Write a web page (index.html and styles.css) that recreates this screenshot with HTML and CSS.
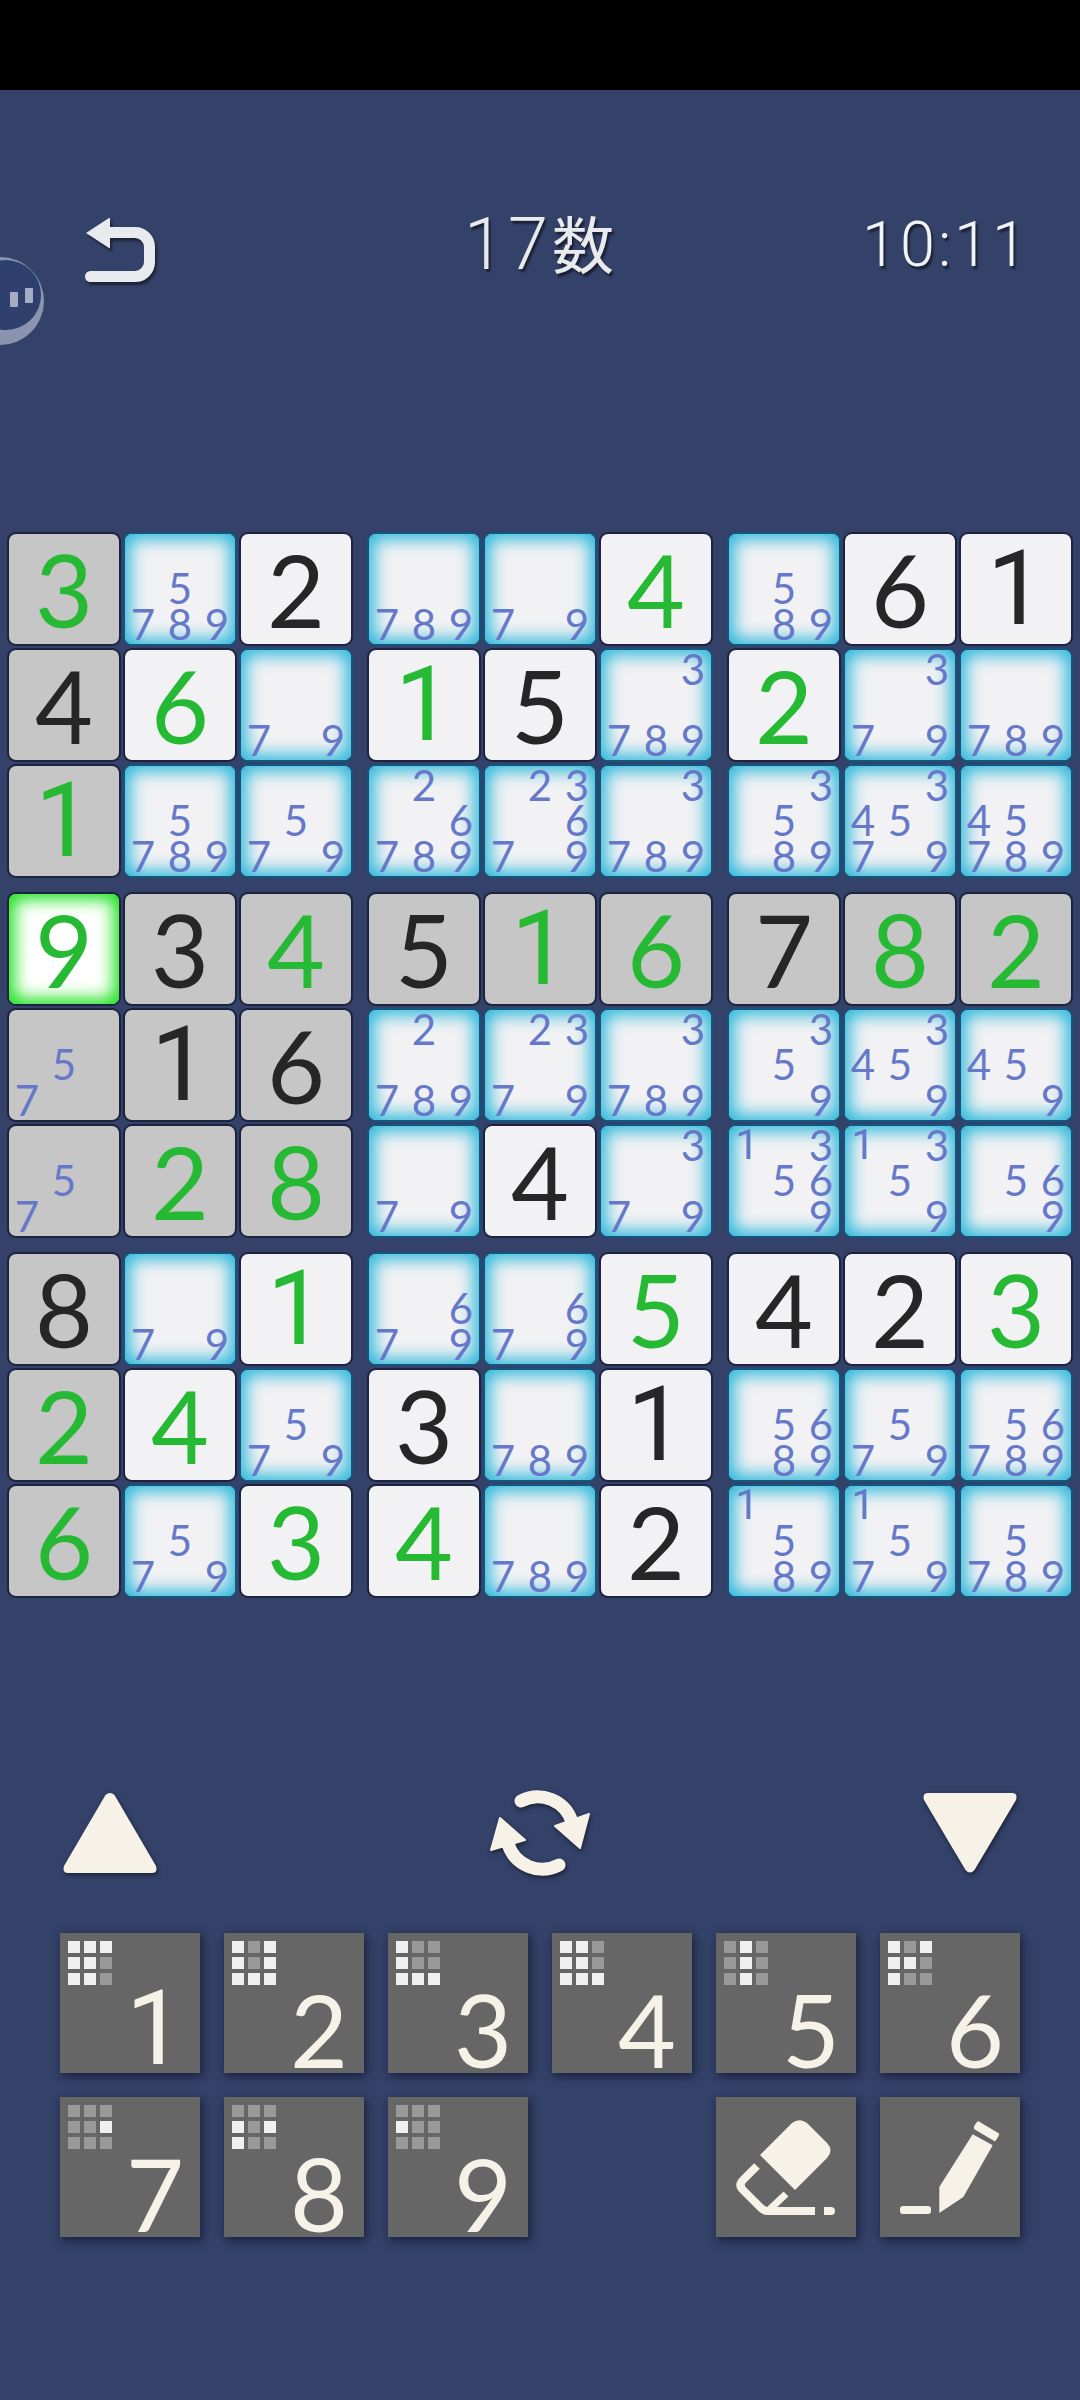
FILE: index.html
```html
<!DOCTYPE html>
<html lang="ja">
<head>
    <meta charset="UTF-8">
    <meta name="viewport" content="width=device-width, initial-scale=1.0">
    <title>17数</title>
    <link rel="stylesheet" href="styles.css">
</head>
<body>
    <div class="statusbar"></div>

    <svg class="floater" width="44" height="88" viewBox="0 0 44 88">
        <circle cx="0" cy="44" r="44" fill="#8b94ae"/>
        <circle cx="6" cy="38" r="35" fill="#2f3f6e"/>
        <rect x="10" y="35" width="8" height="15" rx="1" fill="#a6adc2"/>
        <rect x="25" y="31" width="8" height="15" rx="1" fill="#a6adc2"/>
    </svg>

    <header class="topbar">
        <svg class="back" width="72" height="68" viewBox="0 0 72 68">
            <path d="M1 16 L24 1 Q25 0.5 25 2 V30 Q25 32 24 31 Z" fill="#e9eaed"/>
            <path d="M22 15.5 H50 A14.5 14.5 0 0 1 64.5 30 V45 A14.5 14.5 0 0 1 50 59.5 H5.5" fill="none" stroke="#e9eaed" stroke-width="11" stroke-linecap="round"/>
        </svg>
        <div class="title">17<span class="kanji">数</span></div>
        <div class="clock">10:11</div>
    </header>

    <main class="board">
        <div class="box">
            <div class="cell dim g">3</div>
            <div class="cell notes glow"><span class="n5">5</span><span class="n7">7</span><span class="n8">8</span><span class="n9">9</span></div>
            <div class="cell k">2</div>
            <div class="cell dim k">4</div>
            <div class="cell g">6</div>
            <div class="cell notes glow"><span class="n7">7</span><span class="n9">9</span></div>
            <div class="cell dim g one">1</div>
            <div class="cell notes glow"><span class="n5">5</span><span class="n7">7</span><span class="n8">8</span><span class="n9">9</span></div>
            <div class="cell notes glow"><span class="n5">5</span><span class="n7">7</span><span class="n9">9</span></div>
        </div>
        <div class="box">
            <div class="cell notes glow"><span class="n7">7</span><span class="n8">8</span><span class="n9">9</span></div>
            <div class="cell notes glow"><span class="n7">7</span><span class="n9">9</span></div>
            <div class="cell g">4</div>
            <div class="cell g one">1</div>
            <div class="cell k">5</div>
            <div class="cell notes glow"><span class="n3">3</span><span class="n7">7</span><span class="n8">8</span><span class="n9">9</span></div>
            <div class="cell notes glow"><span class="n2">2</span><span class="n6">6</span><span class="n7">7</span><span class="n8">8</span><span class="n9">9</span></div>
            <div class="cell notes glow"><span class="n2">2</span><span class="n3">3</span><span class="n6">6</span><span class="n7">7</span><span class="n9">9</span></div>
            <div class="cell notes glow"><span class="n3">3</span><span class="n7">7</span><span class="n8">8</span><span class="n9">9</span></div>
        </div>
        <div class="box">
            <div class="cell notes glow"><span class="n5">5</span><span class="n8">8</span><span class="n9">9</span></div>
            <div class="cell k">6</div>
            <div class="cell k one">1</div>
            <div class="cell g">2</div>
            <div class="cell notes glow"><span class="n3">3</span><span class="n7">7</span><span class="n9">9</span></div>
            <div class="cell notes glow"><span class="n7">7</span><span class="n8">8</span><span class="n9">9</span></div>
            <div class="cell notes glow"><span class="n3">3</span><span class="n5">5</span><span class="n8">8</span><span class="n9">9</span></div>
            <div class="cell notes glow"><span class="n3">3</span><span class="n4">4</span><span class="n5">5</span><span class="n7">7</span><span class="n9">9</span></div>
            <div class="cell notes glow"><span class="n4">4</span><span class="n5">5</span><span class="n7">7</span><span class="n8">8</span><span class="n9">9</span></div>
        </div>

        <div class="box">
            <div class="cell selected g">9</div>
            <div class="cell dim k">3</div>
            <div class="cell dim g">4</div>
            <div class="cell dim notes"><span class="n5">5</span><span class="n7">7</span></div>
            <div class="cell dim k one">1</div>
            <div class="cell dim k">6</div>
            <div class="cell dim notes"><span class="n5">5</span><span class="n7">7</span></div>
            <div class="cell dim g">2</div>
            <div class="cell dim g">8</div>
        </div>
        <div class="box">
            <div class="cell dim k">5</div>
            <div class="cell dim g one">1</div>
            <div class="cell dim g">6</div>
            <div class="cell notes glow"><span class="n2">2</span><span class="n7">7</span><span class="n8">8</span><span class="n9">9</span></div>
            <div class="cell notes glow"><span class="n2">2</span><span class="n3">3</span><span class="n7">7</span><span class="n9">9</span></div>
            <div class="cell notes glow"><span class="n3">3</span><span class="n7">7</span><span class="n8">8</span><span class="n9">9</span></div>
            <div class="cell notes glow"><span class="n7">7</span><span class="n9">9</span></div>
            <div class="cell k">4</div>
            <div class="cell notes glow"><span class="n3">3</span><span class="n7">7</span><span class="n9">9</span></div>
        </div>
        <div class="box">
            <div class="cell dim k">7</div>
            <div class="cell dim g">8</div>
            <div class="cell dim g">2</div>
            <div class="cell notes glow"><span class="n3">3</span><span class="n5">5</span><span class="n9">9</span></div>
            <div class="cell notes glow"><span class="n3">3</span><span class="n4">4</span><span class="n5">5</span><span class="n9">9</span></div>
            <div class="cell notes glow"><span class="n4">4</span><span class="n5">5</span><span class="n9">9</span></div>
            <div class="cell notes glow"><span class="n1">1</span><span class="n3">3</span><span class="n5">5</span><span class="n6">6</span><span class="n9">9</span></div>
            <div class="cell notes glow"><span class="n1">1</span><span class="n3">3</span><span class="n5">5</span><span class="n9">9</span></div>
            <div class="cell notes glow"><span class="n5">5</span><span class="n6">6</span><span class="n9">9</span></div>
        </div>

        <div class="box">
            <div class="cell dim k">8</div>
            <div class="cell notes glow"><span class="n7">7</span><span class="n9">9</span></div>
            <div class="cell g one">1</div>
            <div class="cell dim g">2</div>
            <div class="cell g">4</div>
            <div class="cell notes glow"><span class="n5">5</span><span class="n7">7</span><span class="n9">9</span></div>
            <div class="cell dim g">6</div>
            <div class="cell notes glow"><span class="n5">5</span><span class="n7">7</span><span class="n9">9</span></div>
            <div class="cell g">3</div>
        </div>
        <div class="box">
            <div class="cell notes glow"><span class="n6">6</span><span class="n7">7</span><span class="n9">9</span></div>
            <div class="cell notes glow"><span class="n6">6</span><span class="n7">7</span><span class="n9">9</span></div>
            <div class="cell g">5</div>
            <div class="cell k">3</div>
            <div class="cell notes glow"><span class="n7">7</span><span class="n8">8</span><span class="n9">9</span></div>
            <div class="cell k one">1</div>
            <div class="cell g">4</div>
            <div class="cell notes glow"><span class="n7">7</span><span class="n8">8</span><span class="n9">9</span></div>
            <div class="cell k">2</div>
        </div>
        <div class="box">
            <div class="cell k">4</div>
            <div class="cell k">2</div>
            <div class="cell g">3</div>
            <div class="cell notes glow"><span class="n5">5</span><span class="n6">6</span><span class="n8">8</span><span class="n9">9</span></div>
            <div class="cell notes glow"><span class="n5">5</span><span class="n7">7</span><span class="n9">9</span></div>
            <div class="cell notes glow"><span class="n5">5</span><span class="n6">6</span><span class="n7">7</span><span class="n8">8</span><span class="n9">9</span></div>
            <div class="cell notes glow"><span class="n1">1</span><span class="n5">5</span><span class="n8">8</span><span class="n9">9</span></div>
            <div class="cell notes glow"><span class="n1">1</span><span class="n5">5</span><span class="n7">7</span><span class="n9">9</span></div>
            <div class="cell notes glow"><span class="n5">5</span><span class="n7">7</span><span class="n8">8</span><span class="n9">9</span></div>
        </div>
    </main>

    <section class="tools">
        <svg class="tool" width="94" height="82" viewBox="0 0 94 82">
            <path d="M42.5 3 Q47 -1 51.5 3 L93 74 Q95 81 89 81 H5 Q-1 81 1 74 Z" fill="#f6f2e8"/>
        </svg>
        <svg class="tool" width="102" height="86" viewBox="0 0 102 86">
            <path d="M32 11 A36 36 0 0 1 83 32" fill="none" stroke="#f6f2e8" stroke-width="13" stroke-linecap="round"/>
            <path d="M91 58 L100 24 L66 36 Z" fill="#f6f2e8" stroke="#f6f2e8" stroke-width="2" stroke-linejoin="round"/>
            <path d="M70 75 A36 36 0 0 1 19 54" fill="none" stroke="#f6f2e8" stroke-width="13" stroke-linecap="round"/>
            <path d="M11 28 L2 60 L36 50 Z" fill="#f6f2e8" stroke="#f6f2e8" stroke-width="2" stroke-linejoin="round"/>
        </svg>
        <svg class="tool" width="94" height="82" viewBox="0 0 94 82">
            <path d="M5 1 H89 Q95 1 93 8 L51.5 78 Q47 83 42.5 78 L1 8 Q-1 1 5 1 Z" fill="#f6f2e8"/>
        </svg>
    </section>

    <section class="keypad">
        <button class="key">
            <span class="mini"><i></i><i></i><i></i><i></i><i></i><i class="off"></i><i></i><i></i><i class="off"></i></span>
            <span class="digit one">1</span>
        </button>
        <button class="key">
            <span class="mini"><i></i><i class="off"></i><i></i><i></i><i class="off"></i><i></i><i></i><i></i><i></i></span>
            <span class="digit">2</span>
        </button>
        <button class="key">
            <span class="mini"><i></i><i class="off"></i><i class="off"></i><i></i><i class="off"></i><i class="off"></i><i></i><i></i><i></i></span>
            <span class="digit">3</span>
        </button>
        <button class="key">
            <span class="mini"><i></i><i></i><i class="off"></i><i></i><i></i><i class="off"></i><i></i><i></i><i></i></span>
            <span class="digit">4</span>
        </button>
        <button class="key">
            <span class="mini"><i class="off"></i><i></i><i class="off"></i><i class="off"></i><i></i><i class="off"></i><i class="off"></i><i></i><i class="off"></i></span>
            <span class="digit">5</span>
        </button>
        <button class="key">
            <span class="mini"><i></i><i class="off"></i><i></i><i></i><i></i><i class="off"></i><i></i><i class="off"></i><i class="off"></i></span>
            <span class="digit">6</span>
        </button>
        <button class="key">
            <span class="mini"><i class="off"></i><i class="off"></i><i class="off"></i><i class="off"></i><i class="off"></i><i></i><i class="off"></i><i class="off"></i><i class="off"></i></span>
            <span class="digit">7</span>
        </button>
        <button class="key">
            <span class="mini"><i class="off"></i><i class="off"></i><i class="off"></i><i></i><i class="off"></i><i></i><i></i><i class="off"></i><i class="off"></i></span>
            <span class="digit">8</span>
        </button>
        <button class="key">
            <span class="mini"><i class="off"></i><i class="off"></i><i class="off"></i><i></i><i class="off"></i><i class="off"></i><i class="off"></i><i class="off"></i><i class="off"></i></span>
            <span class="digit">9</span>
        </button>
        <button class="key erase">
            <svg width="140" height="140" viewBox="0 0 140 140">
                <path d="M44 58 L76 26 Q84 20 92 27 L111 46 Q118 53 111 61 L79 93 Z" fill="#f6f2e8"/>
                <path d="M41 69 L27 83 Q22 88 27 93 L45 111 Q48 114 52 114 H99" fill="none" stroke="#f6f2e8" stroke-width="8"/>
                <path d="M70 97 L54 112" fill="none" stroke="#f6f2e8" stroke-width="7"/>
                <path d="M108 110 H115 Q119 110 119 114 Q119 118 115 118 H108 Z" fill="#f6f2e8"/>
            </svg>
        </button>
        <button class="key">
            <svg width="140" height="140" viewBox="0 0 140 140">
                <path d="M98 24 L119 36.5 Q120 38 115 44.5 L94 32 Q93 29 98 24 Z" fill="#f6f2e8"/>
                <path d="M92.7 37.3 L112.7 48.3 L83.3 100 L59.3 116 V90 Z" fill="#f6f2e8"/>
                <rect x="20" y="109" width="31" height="8" rx="3" fill="#f6f2e8"/>
            </svg>
        </button>
    </section>
</body>
</html>
```

FILE: styles.css
```css
/* Sudoku screen, 1080 wide */
body {
    margin: 0;
    width: 1080px;
    height: 2400px;
    overflow: hidden;
    position: relative;
    background-color: #344168;
    font-family: 'Lato', 'Noto Sans CJK JP', sans-serif;
}

.statusbar {
    height: 90px;
    background-color: #000;
}

.floater {
    position: absolute;
    left: 0;
    top: 257px;
}

.topbar {
    box-sizing: border-box;
    height: 444px;
    padding: 127px 50px 0 85px;
    display: grid;
    grid-template-columns: 379px auto 1fr;
    align-items: start;
    color: #e9eaed;
}

.back {
    display: block;
    filter: drop-shadow(2px 3px 1px rgba(0, 0, 0, 0.45));
}

.title {
    font-family: 'Roboto', 'Noto Sans CJK JP', sans-serif;
    font-size: 72px;
    line-height: 56px;
    font-weight: 300;
    letter-spacing: 4px;
    text-shadow: 2px 3px 2px rgba(0, 0, 0, 0.5);
}

.kanji {
    font-size: 62px;
    font-weight: 400;
    letter-spacing: 0;
}

.clock {
    justify-self: end;
    font-family: 'Roboto', sans-serif;
    font-size: 63px;
    line-height: 56px;
    font-weight: 300;
    letter-spacing: 3px;
    color: #f2f3f5;
    text-shadow: 2px 3px 2px rgba(0, 0, 0, 0.5);
}

/* board */
.board {
    padding-left: 9px;
    display: grid;
    grid-template-columns: repeat(3, 342px);
    gap: 18px;
}

.box {
    display: grid;
    grid-template-columns: repeat(3, 110px);
    grid-auto-rows: 110px;
    gap: 6px;
}

.cell {
    border-radius: 7px;
    background-color: #f2f2f4;
    box-shadow: 0 0 0 2px rgba(20, 26, 50, 0.75);
    display: flex;
    align-items: center;
    justify-content: center;
    font-size: 100px;
    line-height: 110px;
}

.cell.one {
    font-family: 'Roboto', sans-serif;
    font-size: 103px;
}

.cell.dim {
    background-color: #c6c6c6;
}

.cell.g {
    color: #26b934;
}

.cell.k {
    color: #262626;
}

.cell.glow {
    box-shadow: 0 0 0 2px #14557f, inset 0 0 17px 5px #26b6da;
}

.cell.selected {
    background-color: #fff;
    box-shadow: 0 0 0 2px rgba(20, 26, 50, 0.75), inset 0 0 17px 5px #10e010;
}

.cell.notes {
    box-sizing: border-box;
    padding-top: 1px;
    display: grid;
    grid-template-columns: repeat(3, 37px);
    grid-template-rows: repeat(3, 35.5px);
    justify-content: center;
    align-content: start;
    color: #6678c9;
    font-size: 42px;
    line-height: 36px;
    text-align: center;
}

.n1 { grid-area: 1 / 1; font-family: 'Roboto', sans-serif; }
.n2 { grid-area: 1 / 2; }
.n3 { grid-area: 1 / 3; }
.n4 { grid-area: 2 / 1; }
.n5 { grid-area: 2 / 2; }
.n6 { grid-area: 2 / 3; }
.n7 { grid-area: 3 / 1; }
.n8 { grid-area: 3 / 2; }
.n9 { grid-area: 3 / 3; }

/* up, refresh, down */
.tools {
    margin-top: 195px;
    height: 84px;
    padding: 0 63px;
    display: flex;
    justify-content: space-between;
    align-items: center;
}

.tool {
    display: block;
    filter: drop-shadow(1px 2px 2px rgba(0, 0, 0, 0.5));
}

/* number pad */
.keypad {
    margin-top: 58px;
    padding-left: 60px;
    display: grid;
    grid-template-columns: repeat(6, 140px);
    grid-auto-rows: 140px;
    gap: 24px;
}

.key {
    border: none;
    padding: 0;
    width: 140px;
    height: 140px;
    background-color: #666;
    box-shadow: 2px 3px 9px rgba(8, 12, 32, 0.65);
    display: flex;
    flex-direction: column;
    font-family: inherit;
    color: #f6f2e8;
}

.key.erase {
    grid-column: 5;
}

.key svg {
    display: block;
}

.mini {
    margin: 8px 0 0 8px;
    display: grid;
    grid-template-columns: repeat(3, 12px);
    grid-auto-rows: 12px;
    gap: 4px;
}

.mini i {
    background-color: #f0f0f0;
}

.mini i.off {
    background-color: #999;
}

.digit {
    align-self: flex-end;
    margin-right: 16px;
    font-size: 100px;
    line-height: 88px;
    font-weight: 400;
}

.digit.one {
    font-family: 'Roboto', sans-serif;
    font-size: 103px;
}
```
